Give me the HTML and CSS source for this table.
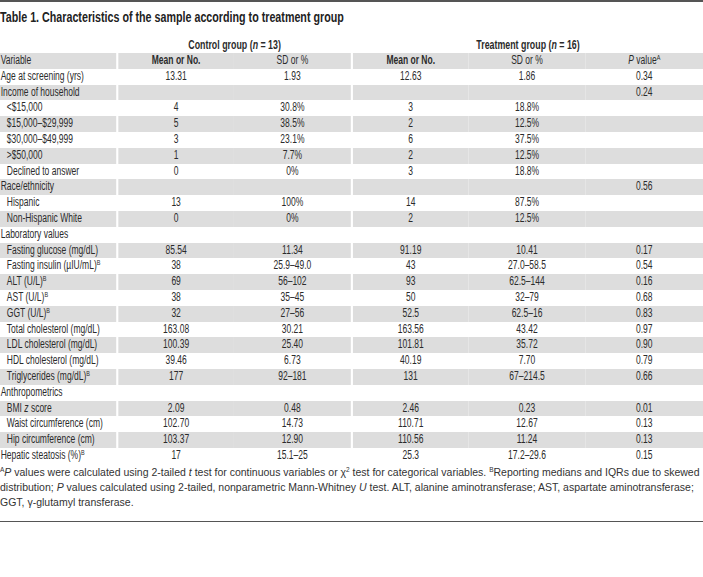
FILE: index.html
```html
<!DOCTYPE html>
<html>
<head>
<meta charset="utf-8">
<link rel="stylesheet" href="styles.css">
</head>
<body>
<div class="page">
  <div class="rule"></div>
  <h1 class="title"><span class="squeeze">Table 1. Characteristics of the sample according to treatment group</span></h1>
  <div class="table-wrap">
  <table class="data">
    <colgroup>
      <col class="c-var"><col class="c-gm"><col class="c-sd"><col class="c-gm"><col class="c-sd2"><col class="c-p">
    </colgroup>
    <thead>
      <tr class="groups">
        <th></th>
        <th colspan="2" class="gap">Control group (<i>n</i> = 13)</th>
        <th colspan="3" class="gap">Treatment group (<i>n</i> = 16)</th>
      </tr>
      <tr class="heads">
        <th class="var">Variable</th>
        <th class="gap strong">Mean or No.</th>
        <th>SD or %</th>
        <th class="gap strong">Mean or No.</th>
        <th>SD or %</th>
        <th><i>P</i> value<sup>A</sup></th>
      </tr>
    </thead>
    <tbody>
      <tr><td class="var">Age at screening (yrs)</td><td class="gap">13.31</td><td>1.93</td><td class="gap">12.63</td><td>1.86</td><td>0.34</td></tr>
      <tr><td class="var">Income of household</td><td class="gap"></td><td></td><td class="gap"></td><td></td><td>0.24</td></tr>
      <tr><td class="var sub">&lt;$15,000</td><td class="gap">4</td><td>30.8%</td><td class="gap">3</td><td>18.8%</td><td></td></tr>
      <tr><td class="var sub">$15,000–$29,999</td><td class="gap">5</td><td>38.5%</td><td class="gap">2</td><td>12.5%</td><td></td></tr>
      <tr><td class="var sub">$30,000–$49,999</td><td class="gap">3</td><td>23.1%</td><td class="gap">6</td><td>37.5%</td><td></td></tr>
      <tr><td class="var sub">&gt;$50,000</td><td class="gap">1</td><td>7.7%</td><td class="gap">2</td><td>12.5%</td><td></td></tr>
      <tr><td class="var sub">Declined to answer</td><td class="gap">0</td><td>0%</td><td class="gap">3</td><td>18.8%</td><td></td></tr>
      <tr><td class="var">Race/ethnicity</td><td class="gap"></td><td></td><td class="gap"></td><td></td><td>0.56</td></tr>
      <tr><td class="var sub">Hispanic</td><td class="gap">13</td><td>100%</td><td class="gap">14</td><td>87.5%</td><td></td></tr>
      <tr><td class="var sub">Non-Hispanic White</td><td class="gap">0</td><td>0%</td><td class="gap">2</td><td>12.5%</td><td></td></tr>
      <tr><td class="var">Laboratory values</td><td class="gap"></td><td></td><td class="gap"></td><td></td><td></td></tr>
      <tr><td class="var sub">Fasting glucose (mg/dL)</td><td class="gap">85.54</td><td>11.34</td><td class="gap">91.19</td><td>10.41</td><td>0.17</td></tr>
      <tr><td class="var sub">Fasting insulin (µIU/mL)<sup>B</sup></td><td class="gap">38</td><td>25.9–49.0</td><td class="gap">43</td><td>27.0–58.5</td><td>0.54</td></tr>
      <tr><td class="var sub">ALT (U/L)<sup>B</sup></td><td class="gap">69</td><td>56–102</td><td class="gap">93</td><td>62.5–144</td><td>0.16</td></tr>
      <tr><td class="var sub">AST (U/L)<sup>B</sup></td><td class="gap">38</td><td>35–45</td><td class="gap">50</td><td>32–79</td><td>0.68</td></tr>
      <tr><td class="var sub">GGT (U/L)<sup>B</sup></td><td class="gap">32</td><td>27–56</td><td class="gap">52.5</td><td>62.5–16</td><td>0.83</td></tr>
      <tr><td class="var sub">Total cholesterol (mg/dL)</td><td class="gap">163.08</td><td>30.21</td><td class="gap">163.56</td><td>43.42</td><td>0.97</td></tr>
      <tr><td class="var sub">LDL cholesterol (mg/dL)</td><td class="gap">100.39</td><td>25.40</td><td class="gap">101.81</td><td>35.72</td><td>0.90</td></tr>
      <tr><td class="var sub">HDL cholesterol (mg/dL)</td><td class="gap">39.46</td><td>6.73</td><td class="gap">40.19</td><td>7.70</td><td>0.79</td></tr>
      <tr><td class="var sub">Triglycerides (mg/dL)<sup>B</sup></td><td class="gap">177</td><td>92–181</td><td class="gap">131</td><td>67–214.5</td><td>0.66</td></tr>
      <tr><td class="var">Anthropometrics</td><td class="gap"></td><td></td><td class="gap"></td><td></td><td></td></tr>
      <tr><td class="var sub">BMI <i>z</i> score</td><td class="gap">2.09</td><td>0.48</td><td class="gap">2.46</td><td>0.23</td><td>0.01</td></tr>
      <tr><td class="var sub">Waist circumference (cm)</td><td class="gap">102.70</td><td>14.73</td><td class="gap">110.71</td><td>12.67</td><td>0.13</td></tr>
      <tr><td class="var sub">Hip circumference (cm)</td><td class="gap">103.37</td><td>12.90</td><td class="gap">110.56</td><td>11.24</td><td>0.13</td></tr>
      <tr><td class="var">Hepatic steatosis (%)<sup>B</sup></td><td class="gap">17</td><td>15.1–25</td><td class="gap">25.3</td><td>17.2–29.6</td><td>0.15</td></tr>
    </tbody>
  </table>
  </div>
  <p class="notes"><sup>A</sup><i>P</i> values were calculated using 2-tailed <i>t</i> test for continuous variables or χ<sup>2</sup> test for categorical variables. <sup>B</sup>Reporting medians and IQRs due to skewed<br>distribution; <i>P</i> values calculated using 2-tailed, nonparametric Mann-Whitney <i>U</i> test. ALT, alanine aminotransferase; AST, aspartate aminotransferase;<br>GGT, γ-glutamyl transferase.</p>
  <div class="rule bottom"></div>
</div>
</body>
</html>
```

FILE: styles.css
```css
html, body {
  margin: 0;
  padding: 0;
  background: #ffffff;
}

.page {
  width: 703px;
  overflow: hidden;
  color: #333333;
}

.rule {
  height: 2px;
  background: #555555;
}

.rule.bottom {
  margin-top: 11px;
  height: 1px;
}

.title {
  margin: 0;
  height: 34px;
  line-height: 30px;
  font-family: "Liberation Sans", sans-serif;
  font-weight: bold;
  font-size: 14px;
  color: #222222;
  white-space: nowrap;
}

.squeeze {
  display: inline-block;
  transform: scaleX(0.765);
  transform-origin: 0 50%;
}

.table-wrap {
  width: 703px;
  overflow: hidden;
}

.data {
  width: 1034px;
  table-layout: fixed;
  border-collapse: separate;
  border-spacing: 0;
  transform: scaleX(0.68);
  transform-origin: 0 0;
  font-family: "Liberation Sans", sans-serif;
  font-size: 12.5px;
  color: #2b2b2b;
}

.c-var { width: 171px; }
.c-gm { width: 173px; }
.c-sd { width: 172px; }
.c-sd2 { width: 172px; }
.c-p { width: 173px; }

.data th, .data td {
  padding: 0;
  height: 15.8px;
  line-height: 15.8px;
  text-align: center;
  font-weight: normal;
  white-space: nowrap;
  overflow: hidden;
}

.data .gap {
  border-left: 3px solid #ffffff;
}

.data .var {
  text-align: left;
  padding-left: 1px;
}

.data .sub {
  padding-left: 10px;
}

.groups th {
  height: 17px;
  line-height: 17px;
  font-weight: bold;
  font-size: 13px;
  vertical-align: middle;
}

.heads th {
  background: #dddddd;
}

.heads .strong {
  font-weight: bold;
}

.data tbody tr:nth-child(even) td {
  background: #dddddd;
}

.data sup {
  font-size: 8px;
  line-height: 0;
  vertical-align: 4px;
}

.notes {
  margin: 0;
  padding-top: 1px;
  font-family: "Liberation Sans", sans-serif;
  font-size: 10.5px;
  line-height: 15px;
  color: #333333;
  white-space: nowrap;
}

.notes sup {
  font-size: 6.5px;
  line-height: 0;
  vertical-align: 4px;
}
```
